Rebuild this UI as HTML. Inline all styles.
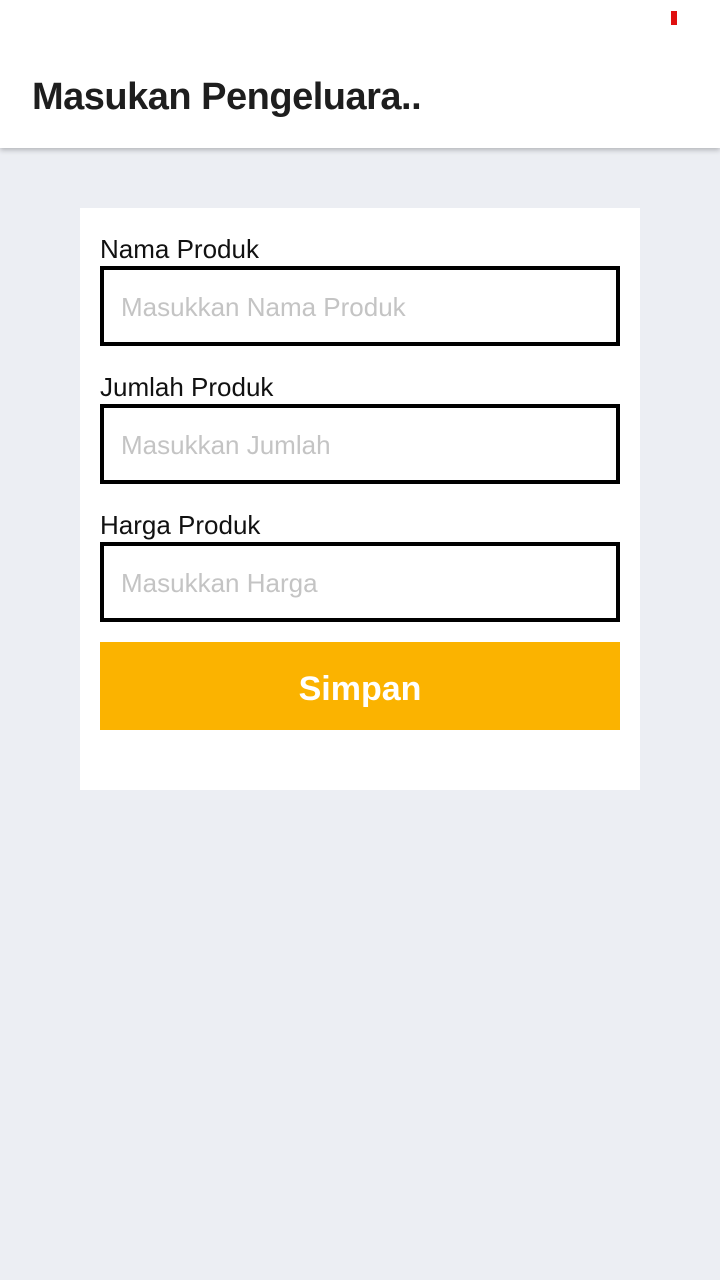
<!DOCTYPE html>
<html><head><meta charset="utf-8"><style>
*{margin:0;padding:0;box-sizing:border-box}
body{width:720px;height:1280px;background:#eceef3;font-family:"Liberation Sans",sans-serif;position:relative;overflow:hidden}
.hdr{position:absolute;left:0;top:0;width:720px;height:148px;background:#fff;box-shadow:0 2px 5px rgba(0,0,0,.25)}
.red{position:absolute;left:671px;top:11px;width:6px;height:14px;background:#e01010}
.title{position:absolute;left:32px;top:76px;font-size:38px;font-weight:bold;color:#1e1e1e;letter-spacing:-0.5px}
.card{position:absolute;left:80px;top:208px;width:560px;height:582px;background:#fff}
.lbl{position:absolute;left:100px;font-size:26px;color:#111}
.inp{position:absolute;left:100px;width:520px;height:80px;border:4px solid #000;background:#fff}
.inp span{position:absolute;left:17px;top:22px;font-size:26px;color:#c4c4c4}
.btn{position:absolute;left:100px;top:642px;width:520px;height:88px;background:#fbb300;color:#fff;font-weight:bold;font-size:34px;text-align:center;line-height:94px}
</style></head><body>
<div class="hdr"><div class="red"></div><div class="title">Masukan Pengeluara..</div></div>
<div class="card"></div>
<div class="lbl" style="top:234px">Nama Produk</div>
<div class="inp" style="top:266px"><span>Masukkan Nama Produk</span></div>
<div class="lbl" style="top:372px">Jumlah Produk</div>
<div class="inp" style="top:404px"><span>Masukkan Jumlah</span></div>
<div class="lbl" style="top:510px">Harga Produk</div>
<div class="inp" style="top:542px"><span>Masukkan Harga</span></div>
<div class="btn">Simpan</div>
</body></html>
